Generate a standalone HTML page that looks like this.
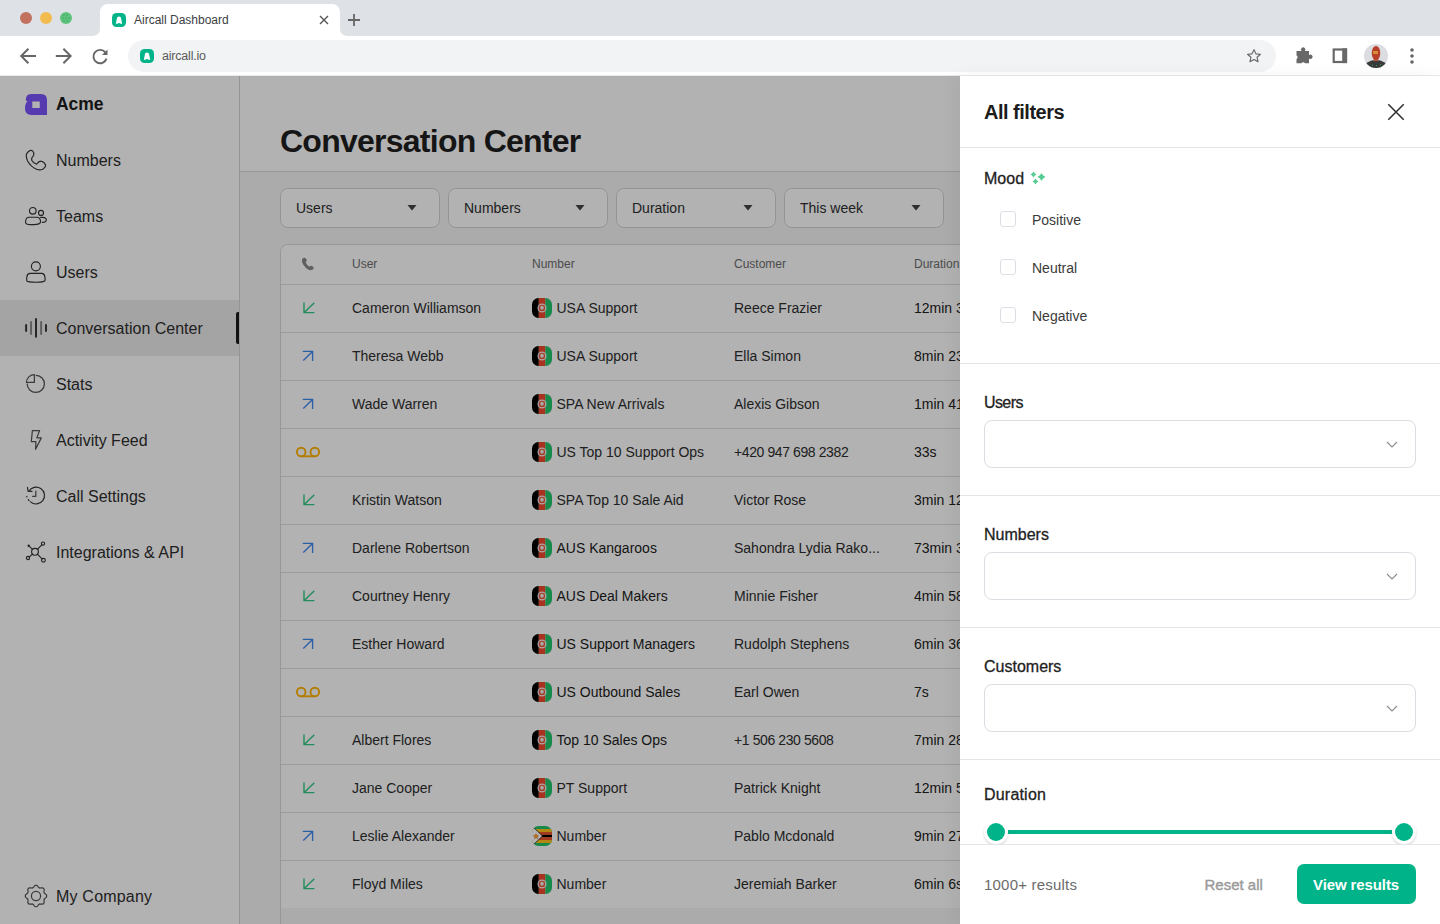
<!DOCTYPE html>
<html><head><meta charset="utf-8"><title>Aircall Dashboard</title>
<style>
*{box-sizing:border-box;margin:0;padding:0}
html,body{width:1440px;height:924px;overflow:hidden;background:#fff;font-family:"Liberation Sans", sans-serif;position:relative}
.abs{position:absolute}
svg{overflow:visible}
.t{position:absolute;white-space:nowrap}
</style></head><body>
<div class="abs" style="left:0;top:0;width:1440px;height:36px;background:#dee1e6"></div>
<div class="abs" style="left:20px;top:12px;width:12px;height:12px;border-radius:50%;background:#c1715d"></div>
<div class="abs" style="left:40px;top:12px;width:12px;height:12px;border-radius:50%;background:#f2bb4f"></div>
<div class="abs" style="left:60px;top:12px;width:12px;height:12px;border-radius:50%;background:#5cc47c"></div>
<svg class="abs" style="left:60px;top:12px" width="12" height="12"><g fill="#2e7d4a" opacity=".55"><circle cx="4" cy="3" r=".7"/><circle cx="7" cy="3" r=".7"/><circle cx="3" cy="6" r=".7"/><circle cx="6" cy="6" r=".7"/><circle cx="9" cy="6" r=".7"/><circle cx="4" cy="9" r=".7"/><circle cx="7" cy="9" r=".7"/></g></svg>
<div class="abs" style="left:100px;top:4px;width:240px;height:32px;background:#fff;border-radius:8px 8px 0 0"></div>
<svg class="abs" style="left:92px;top:28px" width="8" height="8"><path d="M0 8 Q8 8 8 0 L8 8 Z" fill="#fff"/></svg>
<svg class="abs" style="left:340px;top:28px" width="8" height="8"><path d="M8 8 Q0 8 0 0 L0 8 Z" fill="#fff"/></svg>
<svg class="abs" style="left:112px;top:13px" width="14" height="14" viewBox="0 0 14 14"><rect width="14" height="14" rx="4.6" fill="#00b388"/><path d="M3.8 10.8 L5.1 4.4 Q7 2.4 8.9 4.4 L10.2 10.8 L8.6 10.8 Q7 9.2 5.4 10.8 Z" fill="#fff"/></svg>
<div class="t" style="left:134px;top:14.14px;font-size:12px;line-height:12px;color:#3c4043;font-weight:normal;letter-spacing:0px;">Aircall Dashboard</div>
<svg class="abs" style="left:319px;top:15px" width="10" height="10"><path d="M1 1 L9 9 M9 1 L1 9" stroke="#555" stroke-width="1.4"/></svg>
<svg class="abs" style="left:347px;top:13px" width="14" height="14"><path d="M7 1 V13 M1 7 H13" stroke="#666" stroke-width="1.8"/></svg>
<div class="abs" style="left:0;top:36px;width:1440px;height:40px;background:#fff"></div>
<div class="abs" style="left:0;top:75px;width:1440px;height:1px;background:#e8eaed"></div>
<svg class="abs" style="left:18px;top:46px" width="20" height="20" viewBox="0 0 20 20"><path d="M18 10 H3.2 M10.4 2.8 L3.2 10 L10.4 17.2" fill="none" stroke="#666" stroke-width="2"/></svg>
<svg class="abs" style="left:54px;top:46px" width="20" height="20" viewBox="0 0 20 20"><path d="M1.8 10 H16.6 M9.4 2.8 L16.6 10 L9.4 17.2" fill="none" stroke="#666" stroke-width="2"/></svg>
<svg class="abs" style="left:90px;top:46px" width="20" height="20" viewBox="0 0 20 20"><path d="M15.4 6.4 A6.7 6.7 0 1 0 16.5 12.6" fill="none" stroke="#666" stroke-width="1.9"/><path d="M17.5 3.6 V9.1 H12 Z" fill="#666"/></svg>
<div class="abs" style="left:128px;top:40px;width:1148px;height:32px;background:#f1f3f4;border-radius:16px"></div>
<svg class="abs" style="left:140px;top:49px" width="14" height="14" viewBox="0 0 14 14"><rect width="14" height="14" rx="4.6" fill="#00b388"/><path d="M3.8 10.8 L5.1 4.4 Q7 2.4 8.9 4.4 L10.2 10.8 L8.6 10.8 Q7 9.2 5.4 10.8 Z" fill="#fff"/></svg>
<div class="t" style="left:162px;top:49.72px;font-size:12.5px;line-height:12.5px;color:#5a5a5a;font-weight:normal;letter-spacing:-0.2px;">aircall.io</div>
<svg class="abs" style="left:1245px;top:47px" width="18" height="18" viewBox="0 0 24 24"><path d="M12 3.5 L14.6 9.1 L20.6 9.7 L16.1 13.7 L17.4 19.7 L12 16.6 L6.6 19.7 L7.9 13.7 L3.4 9.7 L9.4 9.1 Z" fill="none" stroke="#666" stroke-width="1.5" stroke-linejoin="round"/></svg>
<svg class="abs" style="left:1295px;top:46px" width="18" height="18" viewBox="0 0 18 18"><path d="M1.5 5 H6.5 A2.2 2.2 0 1 1 9.9 5 H14 V9 A2.2 2.2 0 1 1 14 12.4 V17.3 H10 A2 2 0 0 0 6.4 17.3 H1.5 V13 A2 2 0 0 0 1.5 9.4 Z" fill="#686868"/></svg>
<svg class="abs" style="left:1331px;top:47px" width="18" height="18" viewBox="0 0 18 18"><rect x="2.7" y="2.5" width="12.3" height="12.5" fill="none" stroke="#686868" stroke-width="2.2"/><rect x="11.2" y="1.4" width="4.9" height="14.7" fill="#686868"/></svg>
<svg class="abs" style="left:1364px;top:44px" width="24" height="24" viewBox="0 0 24 24"><defs><clipPath id="av"><circle cx="12" cy="12" r="12"/></clipPath></defs><g clip-path="url(#av)"><rect width="24" height="24" fill="#dcdde0"/><ellipse cx="12" cy="24" rx="11.5" ry="8" fill="#3a3a3a"/><rect x="9.5" y="13" width="5" height="4" fill="#b0603a"/><ellipse cx="12" cy="9" rx="4.3" ry="7" fill="#b8402a"/><path d="M9 7 H14 V10 H9 Z" fill="#e0a838" opacity=".75"/><circle cx="8.5" cy="21" r=".6" fill="#2fbf5f"/><circle cx="12.5" cy="21.5" r=".6" fill="#2fbf5f"/><circle cx="16.5" cy="20.5" r=".6" fill="#2fbf5f"/></g></svg>
<svg class="abs" style="left:1408px;top:47px" width="8" height="18"><circle cx="4" cy="3" r="1.8" fill="#666"/><circle cx="4" cy="9" r="1.8" fill="#666"/><circle cx="4" cy="15" r="1.8" fill="#666"/></svg>
<div class="abs" style="left:0;top:76px;width:1440px;height:848px;background:#f5f5f5"></div>
<div class="abs" style="left:0;top:76px;width:239px;height:848px;background:#fff"></div>
<div class="abs" style="left:239px;top:76px;width:1px;height:848px;background:#d6d6d6"></div>
<div class="abs" style="left:0;top:300px;width:239px;height:56px;background:#ebebeb"></div>
<div class="abs" style="left:235.5px;top:312px;width:3.5px;height:32px;background:#1a1a1a;border-radius:2px 0 0 2px"></div>
<svg class="abs" style="left:25px;top:94px" width="22" height="21" viewBox="0 0 22 21"><path d="M6 0 H16 Q22 0 22 6 V21 H6.5 Q0 21 0 14.5 Q0 9 2.5 7.2 Q0.8 6.8 0.8 6 Q0.8 0 6 0 Z M7.3 7.4 V14 H14.75 V7.4 Z" fill="#7b54fb" fill-rule="evenodd"/></svg>
<div class="t" style="left:56px;top:95.94px;font-size:17.5px;line-height:17.5px;color:#1c1c1c;font-weight:bold;letter-spacing:-0.1px;">Acme</div>
<svg class="abs" style="left:25px;top:150px" width="22" height="22" viewBox="0 0 22 22"><path d="M5.7 0.4 Q3.2 0.9 1.7 3.6 Q0.5 6.4 2.6 11 Q5.8 16.8 11.6 19.3 Q15.2 20.6 18.2 18.9 Q21 17 20.6 15 Q19.6 12 16.2 11.2 Q13.6 11.1 11.6 14.2 Q8.4 13.4 6.7 10.2 Q6.2 7.8 8.6 5.4 Q9.4 2.6 7.6 0.9 Q6.8 0.3 5.7 0.4 Z" fill="none" stroke="#333" stroke-width="1.15" stroke-linecap="round" stroke-linejoin="round"/></svg>
<div class="t" style="left:56px;top:153.46px;font-size:16px;line-height:16px;color:#2e2e2e;font-weight:normal;letter-spacing:0px;">Numbers</div>
<svg class="abs" style="left:25px;top:206px" width="22" height="22" viewBox="0 0 22 22"><circle cx="7.8" cy="4.8" r="3.3" fill="none" stroke="#333" stroke-width="1.15" stroke-linecap="round" stroke-linejoin="round"/><circle cx="16" cy="6.9" r="2.5" fill="none" stroke="#333" stroke-width="1.15" stroke-linecap="round" stroke-linejoin="round"/><path d="M4 11.2 H11.8 Q15.3 11.2 15.6 15.6 Q15.7 18.6 8.6 18.6 H5.6 Q0.3 18.6 0.5 15.8 Q0.9 11.2 4 11.2 Z" fill="none" stroke="#333" stroke-width="1.15" stroke-linecap="round" stroke-linejoin="round"/><path d="M15.6 11.4 H17.6 Q21.4 11.6 21.3 14.2 Q21.1 16.2 17.4 16.4" fill="none" stroke="#333" stroke-width="1.15" stroke-linecap="round" stroke-linejoin="round"/></svg>
<div class="t" style="left:56px;top:209.46px;font-size:16px;line-height:16px;color:#2e2e2e;font-weight:normal;letter-spacing:0px;">Teams</div>
<svg class="abs" style="left:25px;top:262px" width="22" height="22" viewBox="0 0 22 22"><circle cx="10.9" cy="4.3" r="4.5" fill="none" stroke="#333" stroke-width="1.15" stroke-linecap="round" stroke-linejoin="round"/><path d="M5 11.4 H16.8 Q19.4 11.4 19.8 14.6 Q20.4 17.4 20 18.6 Q19 20.2 11 20.2 Q2.8 20.2 1.8 18.8 Q1.4 17.6 1.9 14.6 Q2.4 11.4 5 11.4 Z" fill="none" stroke="#333" stroke-width="1.15" stroke-linecap="round" stroke-linejoin="round"/></svg>
<div class="t" style="left:56px;top:265.46px;font-size:16px;line-height:16px;color:#2e2e2e;font-weight:normal;letter-spacing:0px;">Users</div>
<svg class="abs" style="left:25px;top:318px" width="22" height="22" viewBox="0 0 22 22"><rect x="0.1" y="6" width="2" height="7.9" rx="1" fill="#383838"/><rect x="5.05" y="3" width="2" height="13.9" rx="1" fill="#8a8a8a"/><rect x="10" y="0.1" width="2" height="19.7" rx="1" fill="#383838"/><rect x="15.1" y="3" width="2" height="13.9" rx="1" fill="#8a8a8a"/><rect x="20" y="6" width="2" height="7.9" rx="1" fill="#383838"/></svg>
<div class="t" style="left:56px;top:321.46px;font-size:16px;line-height:16px;color:#2e2e2e;font-weight:normal;letter-spacing:0px;">Conversation Center</div>
<svg class="abs" style="left:25px;top:374px" width="22" height="22" viewBox="0 0 22 22"><path d="M11.2 1.3 A8.6 8.6 0 1 1 2.2 10" fill="none" stroke="#555" stroke-width="1.25" stroke-linecap="round" stroke-linejoin="round"/><path d="M9.4 0.6 V8.3 H1.4 A8 8 0 0 1 9.4 0.6 Z" fill="none" stroke="#555" stroke-width="1.25" stroke-linecap="round" stroke-linejoin="round"/></svg>
<div class="t" style="left:56px;top:377.46px;font-size:16px;line-height:16px;color:#2e2e2e;font-weight:normal;letter-spacing:0px;">Stats</div>
<svg class="abs" style="left:25px;top:430px" width="22" height="22" viewBox="0 0 22 22"><path d="M7.4 0.5 H14.6 L11.8 7.9 H16.3 L10.6 19.3 L10.9 11.5 H6.3 Z" fill="none" stroke="#555" stroke-width="1.25" stroke-linecap="round" stroke-linejoin="round"/></svg>
<div class="t" style="left:56px;top:433.46px;font-size:16px;line-height:16px;color:#2e2e2e;font-weight:normal;letter-spacing:0px;">Activity Feed</div>
<svg class="abs" style="left:25px;top:486px" width="22" height="22" viewBox="0 0 22 22"><path d="M3.83 5.35 A8.4 8.4 0 1 1 5.6 15.9" fill="none" stroke="#333" stroke-width="1.15" stroke-linecap="round" stroke-linejoin="round"/><path d="M3.3 13.6 L4.1 14.8" fill="none" stroke="#333" stroke-width="1.15" stroke-linecap="round" stroke-linejoin="round"/><path d="M1.8 10.4 L1.8 10.9" fill="none" stroke="#333" stroke-width="1.15" stroke-linecap="round" stroke-linejoin="round" stroke-width="1.5"/><path d="M2.5 1.3 L3.1 5.3 L7 5.4" fill="none" stroke="#333" stroke-width="1.15" stroke-linecap="round" stroke-linejoin="round"/><path d="M10.8 5.2 V10.3 H7.6" fill="none" stroke="#555" stroke-width="1.25" stroke-linecap="round" stroke-linejoin="round" stroke-width="1.5"/></svg>
<div class="t" style="left:56px;top:489.46px;font-size:16px;line-height:16px;color:#2e2e2e;font-weight:normal;letter-spacing:0px;">Call Settings</div>
<svg class="abs" style="left:25px;top:542px" width="22" height="22" viewBox="0 0 22 22"><circle cx="10" cy="9.8" r="3.4" fill="none" stroke="#333" stroke-width="1.15" stroke-linecap="round" stroke-linejoin="round"/><circle cx="3.7" cy="3.7" r="1.2" fill="#333"/><circle cx="18" cy="1.6" r="1.6" fill="none" stroke="#333" stroke-width="1.15" stroke-linecap="round" stroke-linejoin="round"/><circle cx="3" cy="16" r="1.6" fill="none" stroke="#333" stroke-width="1.15" stroke-linecap="round" stroke-linejoin="round"/><circle cx="18.4" cy="18.2" r="1.9" fill="none" stroke="#333" stroke-width="1.15" stroke-linecap="round" stroke-linejoin="round"/><path d="M4.4 4.4 L7.6 7.4 M16.8 2.8 L12.4 7.4 M4.1 14.9 L7.6 12.2 M17 16.8 L12.4 12.2" fill="none" stroke="#333" stroke-width="1.15" stroke-linecap="round" stroke-linejoin="round"/></svg>
<div class="t" style="left:56px;top:545.46px;font-size:16px;line-height:16px;color:#2e2e2e;font-weight:normal;letter-spacing:0px;">Integrations &amp; API</div>
<svg class="abs" style="left:25px;top:885px" width="22" height="22" viewBox="0 0 22 22"><path d="M11.00 0.25 L11.69 0.41 L12.34 0.84 L12.90 1.44 L13.39 2.07 L13.86 2.59 L14.35 2.92 L14.93 3.03 L15.62 2.99 L16.42 2.89 L17.24 2.87 L18.00 3.02 L18.60 3.40 L18.98 4.00 L19.13 4.76 L19.11 5.58 L19.01 6.37 L18.97 7.07 L19.08 7.65 L19.41 8.14 L19.93 8.61 L20.56 9.10 L21.16 9.66 L21.59 10.31 L21.75 11.00 L21.59 11.69 L21.16 12.34 L20.56 12.90 L19.93 13.39 L19.41 13.86 L19.08 14.35 L18.97 14.93 L19.01 15.62 L19.11 16.42 L19.13 17.24 L18.98 18.00 L18.60 18.60 L18.00 18.98 L17.24 19.13 L16.42 19.11 L15.62 19.01 L14.93 18.97 L14.35 19.08 L13.86 19.41 L13.39 19.93 L12.90 20.56 L12.34 21.16 L11.69 21.59 L11.00 21.75 L10.31 21.59 L9.66 21.16 L9.10 20.56 L8.61 19.93 L8.14 19.41 L7.65 19.08 L7.07 18.97 L6.38 19.01 L5.58 19.11 L4.76 19.13 L4.00 18.98 L3.40 18.60 L3.02 18.00 L2.87 17.24 L2.89 16.42 L2.99 15.63 L3.03 14.93 L2.92 14.35 L2.59 13.86 L2.07 13.39 L1.44 12.90 L0.84 12.34 L0.41 11.69 L0.25 11.00 L0.41 10.31 L0.84 9.66 L1.44 9.10 L2.07 8.61 L2.59 8.14 L2.92 7.65 L3.03 7.07 L2.99 6.37 L2.89 5.58 L2.87 4.76 L3.02 4.00 L3.40 3.40 L4.00 3.02 L4.76 2.87 L5.58 2.89 L6.37 2.99 L7.07 3.03 L7.65 2.92 L8.14 2.59 L8.61 2.07 L9.10 1.44 L9.66 0.84 L10.31 0.41 Z" fill="none" stroke="#555" stroke-width="1.25" stroke-linecap="round" stroke-linejoin="round" stroke-width="1.2"/><circle cx="11" cy="11" r="4.6" fill="none" stroke="#555" stroke-width="1.25" stroke-linecap="round" stroke-linejoin="round" stroke-width="1.2"/></svg>
<div class="t" style="left:56px;top:889.46px;font-size:16px;line-height:16px;color:#2e2e2e;font-weight:normal;letter-spacing:0.2px;">My Company</div>
<div class="abs" style="left:240px;top:76px;width:1200px;height:95px;background:#fff"></div>
<div class="abs" style="left:240px;top:171px;width:1200px;height:1px;background:#d9d9d9"></div>
<div class="t" style="left:280px;top:124.61px;font-size:32px;line-height:32px;color:#1f1f1f;font-weight:bold;letter-spacing:-0.75px;">Conversation Center</div>
<div class="abs" style="left:280px;top:188px;width:160px;height:40px;background:#fff;border:1px solid #d5d5d5;border-radius:8px"></div>
<div class="t" style="left:296px;top:200.90px;font-size:14px;line-height:14px;color:#2e2e2e;font-weight:normal;letter-spacing:0px;">Users</div>
<svg class="abs" style="left:407px;top:205px" width="10" height="6"><path d="M0.5 0 H9.5 L5 5.5 Z" fill="#444"/></svg>
<div class="abs" style="left:448px;top:188px;width:160px;height:40px;background:#fff;border:1px solid #d5d5d5;border-radius:8px"></div>
<div class="t" style="left:464px;top:200.90px;font-size:14px;line-height:14px;color:#2e2e2e;font-weight:normal;letter-spacing:0px;">Numbers</div>
<svg class="abs" style="left:575px;top:205px" width="10" height="6"><path d="M0.5 0 H9.5 L5 5.5 Z" fill="#444"/></svg>
<div class="abs" style="left:616px;top:188px;width:160px;height:40px;background:#fff;border:1px solid #d5d5d5;border-radius:8px"></div>
<div class="t" style="left:632px;top:200.90px;font-size:14px;line-height:14px;color:#2e2e2e;font-weight:normal;letter-spacing:0px;">Duration</div>
<svg class="abs" style="left:743px;top:205px" width="10" height="6"><path d="M0.5 0 H9.5 L5 5.5 Z" fill="#444"/></svg>
<div class="abs" style="left:784px;top:188px;width:160px;height:40px;background:#fff;border:1px solid #d5d5d5;border-radius:8px"></div>
<div class="t" style="left:800px;top:200.90px;font-size:14px;line-height:14px;color:#2e2e2e;font-weight:normal;letter-spacing:0px;">This week</div>
<svg class="abs" style="left:911px;top:205px" width="10" height="6"><path d="M0.5 0 H9.5 L5 5.5 Z" fill="#444"/></svg>
<div class="abs" style="left:280px;top:244px;width:700px;height:700px;background:#f5f5f5;border:1px solid #d9d9d9;border-radius:8px 0 0 0"></div>
<div class="abs" style="left:281px;top:245px;width:700px;height:663px;background:#fff;border-radius:7px 0 0 0"></div>
<svg class="abs" style="left:301px;top:257px" width="14" height="14" viewBox="0 0 14 14"><path d="M3.2 0.8 Q1.6 0.8 1 2.4 Q0.5 4.6 2.2 7.6 Q4.6 11.6 8 13 Q10 13.6 11.6 12.6 Q13.2 11.6 12.6 10.4 Q11.8 9.2 10.2 8.8 Q9 8.8 8.5 9.8 Q6.4 8.8 5 6 Q4.5 5 5.2 4.4 Q6 3.8 5.7 2.6 Q5 0.8 3.2 0.8 Z" fill="#8a8a8a"/></svg>
<div class="t" style="left:352px;top:257.74px;font-size:12px;line-height:12px;color:#6e6e6e;font-weight:normal;letter-spacing:0px;">User</div>
<div class="t" style="left:532px;top:257.74px;font-size:12px;line-height:12px;color:#6e6e6e;font-weight:normal;letter-spacing:0px;">Number</div>
<div class="t" style="left:734px;top:257.74px;font-size:12px;line-height:12px;color:#6e6e6e;font-weight:normal;letter-spacing:0px;">Customer</div>
<div class="t" style="left:914px;top:257.74px;font-size:12px;line-height:12px;color:#6e6e6e;font-weight:normal;letter-spacing:0px;">Duration</div>
<div class="abs" style="left:281px;top:284px;width:700px;height:1px;background:#dedede"></div>
<svg class="abs" style="left:301.5px;top:301px" width="14" height="14" viewBox="0 0 14 14"><path d="M12.3 1.7 L2.3 11.5 M2 1.4 V11.6 H12.4" fill="none" stroke="#32c882" stroke-width="1.4"/></svg>
<div class="t" style="left:352px;top:300.95px;font-size:14px;line-height:14px;color:#2e2e2e;font-weight:normal;letter-spacing:0px;">Cameron Williamson</div>
<svg class="abs" style="left:532px;top:298px" width="20" height="20" viewBox="0 0 20 20"><defs><clipPath id="fc0"><rect width="20" height="20" rx="6.5"/></clipPath></defs><g clip-path="url(#fc0)"><rect width="6.8" height="20" fill="#000"/><rect x="6.8" width="6.6" height="20" fill="#ee4a2c"/><rect x="13.4" width="6.6" height="20" fill="#22c46a"/><circle cx="10" cy="10" r="3.9" fill="none" stroke="#fff" stroke-width="1.3" opacity=".9"/><circle cx="10" cy="10" r="2.6" fill="none" stroke="#e86a4a" stroke-width="0.8"/><ellipse cx="10" cy="9.8" rx="1.8" ry="2" fill="#f2f2f2"/></g></svg>
<div class="t" style="left:556.5px;top:300.95px;font-size:14px;line-height:14px;color:#2e2e2e;font-weight:normal;letter-spacing:0px;">USA Support</div>
<div class="t" style="left:734px;top:300.95px;font-size:14px;line-height:14px;color:#2e2e2e;font-weight:normal;letter-spacing:0px;">Reece Frazier</div>
<div class="t" style="left:914px;top:300.95px;font-size:14px;line-height:14px;color:#222;font-weight:normal;letter-spacing:0px;">12min 32s</div>
<div class="abs" style="left:281px;top:332px;width:700px;height:1px;background:#dedede"></div>
<svg class="abs" style="left:301px;top:349px" width="14" height="14" viewBox="0 0 14 14"><path d="M2.3 11.6 L11.5 2.5 M1.8 2.4 H11.6 V11.9" fill="none" stroke="#4088f0" stroke-width="1.35"/></svg>
<div class="t" style="left:352px;top:348.95px;font-size:14px;line-height:14px;color:#2e2e2e;font-weight:normal;letter-spacing:0px;">Theresa Webb</div>
<svg class="abs" style="left:532px;top:346px" width="20" height="20" viewBox="0 0 20 20"><defs><clipPath id="fc1"><rect width="20" height="20" rx="6.5"/></clipPath></defs><g clip-path="url(#fc1)"><rect width="6.8" height="20" fill="#000"/><rect x="6.8" width="6.6" height="20" fill="#ee4a2c"/><rect x="13.4" width="6.6" height="20" fill="#22c46a"/><circle cx="10" cy="10" r="3.9" fill="none" stroke="#fff" stroke-width="1.3" opacity=".9"/><circle cx="10" cy="10" r="2.6" fill="none" stroke="#e86a4a" stroke-width="0.8"/><ellipse cx="10" cy="9.8" rx="1.8" ry="2" fill="#f2f2f2"/></g></svg>
<div class="t" style="left:556.5px;top:348.95px;font-size:14px;line-height:14px;color:#2e2e2e;font-weight:normal;letter-spacing:0px;">USA Support</div>
<div class="t" style="left:734px;top:348.95px;font-size:14px;line-height:14px;color:#2e2e2e;font-weight:normal;letter-spacing:0px;">Ella Simon</div>
<div class="t" style="left:914px;top:348.95px;font-size:14px;line-height:14px;color:#222;font-weight:normal;letter-spacing:0px;">8min 23s</div>
<div class="abs" style="left:281px;top:380px;width:700px;height:1px;background:#dedede"></div>
<svg class="abs" style="left:301px;top:397px" width="14" height="14" viewBox="0 0 14 14"><path d="M2.3 11.6 L11.5 2.5 M1.8 2.4 H11.6 V11.9" fill="none" stroke="#4088f0" stroke-width="1.35"/></svg>
<div class="t" style="left:352px;top:396.95px;font-size:14px;line-height:14px;color:#2e2e2e;font-weight:normal;letter-spacing:0px;">Wade Warren</div>
<svg class="abs" style="left:532px;top:394px" width="20" height="20" viewBox="0 0 20 20"><defs><clipPath id="fc2"><rect width="20" height="20" rx="6.5"/></clipPath></defs><g clip-path="url(#fc2)"><rect width="6.8" height="20" fill="#000"/><rect x="6.8" width="6.6" height="20" fill="#ee4a2c"/><rect x="13.4" width="6.6" height="20" fill="#22c46a"/><circle cx="10" cy="10" r="3.9" fill="none" stroke="#fff" stroke-width="1.3" opacity=".9"/><circle cx="10" cy="10" r="2.6" fill="none" stroke="#e86a4a" stroke-width="0.8"/><ellipse cx="10" cy="9.8" rx="1.8" ry="2" fill="#f2f2f2"/></g></svg>
<div class="t" style="left:556.5px;top:396.95px;font-size:14px;line-height:14px;color:#2e2e2e;font-weight:normal;letter-spacing:0px;">SPA New Arrivals</div>
<div class="t" style="left:734px;top:396.95px;font-size:14px;line-height:14px;color:#2e2e2e;font-weight:normal;letter-spacing:0px;">Alexis Gibson</div>
<div class="t" style="left:914px;top:396.95px;font-size:14px;line-height:14px;color:#222;font-weight:normal;letter-spacing:0px;">1min 41s</div>
<div class="abs" style="left:281px;top:428px;width:700px;height:1px;background:#dedede"></div>
<svg class="abs" style="left:295px;top:445px" width="26" height="14" viewBox="0 0 26 14"><circle cx="6.2" cy="7" r="4.3" fill="none" stroke="#ffb300" stroke-width="1.9"/><circle cx="19.8" cy="7" r="4.3" fill="none" stroke="#ffb300" stroke-width="1.9"/><path d="M6.2 11.3 H19.8" stroke="#ffb300" stroke-width="1.9"/></svg>
<svg class="abs" style="left:532px;top:442px" width="20" height="20" viewBox="0 0 20 20"><defs><clipPath id="fc3"><rect width="20" height="20" rx="6.5"/></clipPath></defs><g clip-path="url(#fc3)"><rect width="6.8" height="20" fill="#000"/><rect x="6.8" width="6.6" height="20" fill="#ee4a2c"/><rect x="13.4" width="6.6" height="20" fill="#22c46a"/><circle cx="10" cy="10" r="3.9" fill="none" stroke="#fff" stroke-width="1.3" opacity=".9"/><circle cx="10" cy="10" r="2.6" fill="none" stroke="#e86a4a" stroke-width="0.8"/><ellipse cx="10" cy="9.8" rx="1.8" ry="2" fill="#f2f2f2"/></g></svg>
<div class="t" style="left:556.5px;top:444.95px;font-size:14px;line-height:14px;color:#2e2e2e;font-weight:normal;letter-spacing:0px;">US Top 10 Support Ops</div>
<div class="t" style="left:734px;top:444.95px;font-size:14px;line-height:14px;color:#2e2e2e;font-weight:normal;letter-spacing:-0.4px;">+420 947 698 2382</div>
<div class="t" style="left:914px;top:444.95px;font-size:14px;line-height:14px;color:#222;font-weight:normal;letter-spacing:0px;">33s</div>
<div class="abs" style="left:281px;top:476px;width:700px;height:1px;background:#dedede"></div>
<svg class="abs" style="left:301.5px;top:493px" width="14" height="14" viewBox="0 0 14 14"><path d="M12.3 1.7 L2.3 11.5 M2 1.4 V11.6 H12.4" fill="none" stroke="#32c882" stroke-width="1.4"/></svg>
<div class="t" style="left:352px;top:492.95px;font-size:14px;line-height:14px;color:#2e2e2e;font-weight:normal;letter-spacing:0px;">Kristin Watson</div>
<svg class="abs" style="left:532px;top:490px" width="20" height="20" viewBox="0 0 20 20"><defs><clipPath id="fc4"><rect width="20" height="20" rx="6.5"/></clipPath></defs><g clip-path="url(#fc4)"><rect width="6.8" height="20" fill="#000"/><rect x="6.8" width="6.6" height="20" fill="#ee4a2c"/><rect x="13.4" width="6.6" height="20" fill="#22c46a"/><circle cx="10" cy="10" r="3.9" fill="none" stroke="#fff" stroke-width="1.3" opacity=".9"/><circle cx="10" cy="10" r="2.6" fill="none" stroke="#e86a4a" stroke-width="0.8"/><ellipse cx="10" cy="9.8" rx="1.8" ry="2" fill="#f2f2f2"/></g></svg>
<div class="t" style="left:556.5px;top:492.95px;font-size:14px;line-height:14px;color:#2e2e2e;font-weight:normal;letter-spacing:0px;">SPA Top 10 Sale Aid</div>
<div class="t" style="left:734px;top:492.95px;font-size:14px;line-height:14px;color:#2e2e2e;font-weight:normal;letter-spacing:0px;">Victor Rose</div>
<div class="t" style="left:914px;top:492.95px;font-size:14px;line-height:14px;color:#222;font-weight:normal;letter-spacing:0px;">3min 12s</div>
<div class="abs" style="left:281px;top:524px;width:700px;height:1px;background:#dedede"></div>
<svg class="abs" style="left:301px;top:541px" width="14" height="14" viewBox="0 0 14 14"><path d="M2.3 11.6 L11.5 2.5 M1.8 2.4 H11.6 V11.9" fill="none" stroke="#4088f0" stroke-width="1.35"/></svg>
<div class="t" style="left:352px;top:540.95px;font-size:14px;line-height:14px;color:#2e2e2e;font-weight:normal;letter-spacing:0px;">Darlene Robertson</div>
<svg class="abs" style="left:532px;top:538px" width="20" height="20" viewBox="0 0 20 20"><defs><clipPath id="fc5"><rect width="20" height="20" rx="6.5"/></clipPath></defs><g clip-path="url(#fc5)"><rect width="6.8" height="20" fill="#000"/><rect x="6.8" width="6.6" height="20" fill="#ee4a2c"/><rect x="13.4" width="6.6" height="20" fill="#22c46a"/><circle cx="10" cy="10" r="3.9" fill="none" stroke="#fff" stroke-width="1.3" opacity=".9"/><circle cx="10" cy="10" r="2.6" fill="none" stroke="#e86a4a" stroke-width="0.8"/><ellipse cx="10" cy="9.8" rx="1.8" ry="2" fill="#f2f2f2"/></g></svg>
<div class="t" style="left:556.5px;top:540.95px;font-size:14px;line-height:14px;color:#1c1c1c;font-weight:normal;letter-spacing:0px;">AUS Kangaroos</div>
<div class="t" style="left:734px;top:540.95px;font-size:14px;line-height:14px;color:#2e2e2e;font-weight:normal;letter-spacing:0px;">Sahondra Lydia Rako...</div>
<div class="t" style="left:914px;top:540.95px;font-size:14px;line-height:14px;color:#222;font-weight:normal;letter-spacing:0px;">73min 31s</div>
<div class="abs" style="left:281px;top:572px;width:700px;height:1px;background:#dedede"></div>
<svg class="abs" style="left:301.5px;top:589px" width="14" height="14" viewBox="0 0 14 14"><path d="M12.3 1.7 L2.3 11.5 M2 1.4 V11.6 H12.4" fill="none" stroke="#32c882" stroke-width="1.4"/></svg>
<div class="t" style="left:352px;top:588.95px;font-size:14px;line-height:14px;color:#2e2e2e;font-weight:normal;letter-spacing:0px;">Courtney Henry</div>
<svg class="abs" style="left:532px;top:586px" width="20" height="20" viewBox="0 0 20 20"><defs><clipPath id="fc6"><rect width="20" height="20" rx="6.5"/></clipPath></defs><g clip-path="url(#fc6)"><rect width="6.8" height="20" fill="#000"/><rect x="6.8" width="6.6" height="20" fill="#ee4a2c"/><rect x="13.4" width="6.6" height="20" fill="#22c46a"/><circle cx="10" cy="10" r="3.9" fill="none" stroke="#fff" stroke-width="1.3" opacity=".9"/><circle cx="10" cy="10" r="2.6" fill="none" stroke="#e86a4a" stroke-width="0.8"/><ellipse cx="10" cy="9.8" rx="1.8" ry="2" fill="#f2f2f2"/></g></svg>
<div class="t" style="left:556.5px;top:588.95px;font-size:14px;line-height:14px;color:#1c1c1c;font-weight:normal;letter-spacing:0px;">AUS Deal Makers</div>
<div class="t" style="left:734px;top:588.95px;font-size:14px;line-height:14px;color:#2e2e2e;font-weight:normal;letter-spacing:0px;">Minnie Fisher</div>
<div class="t" style="left:914px;top:588.95px;font-size:14px;line-height:14px;color:#222;font-weight:normal;letter-spacing:0px;">4min 58s</div>
<div class="abs" style="left:281px;top:620px;width:700px;height:1px;background:#dedede"></div>
<svg class="abs" style="left:301px;top:637px" width="14" height="14" viewBox="0 0 14 14"><path d="M2.3 11.6 L11.5 2.5 M1.8 2.4 H11.6 V11.9" fill="none" stroke="#4088f0" stroke-width="1.35"/></svg>
<div class="t" style="left:352px;top:636.95px;font-size:14px;line-height:14px;color:#2e2e2e;font-weight:normal;letter-spacing:0px;">Esther Howard</div>
<svg class="abs" style="left:532px;top:634px" width="20" height="20" viewBox="0 0 20 20"><defs><clipPath id="fc7"><rect width="20" height="20" rx="6.5"/></clipPath></defs><g clip-path="url(#fc7)"><rect width="6.8" height="20" fill="#000"/><rect x="6.8" width="6.6" height="20" fill="#ee4a2c"/><rect x="13.4" width="6.6" height="20" fill="#22c46a"/><circle cx="10" cy="10" r="3.9" fill="none" stroke="#fff" stroke-width="1.3" opacity=".9"/><circle cx="10" cy="10" r="2.6" fill="none" stroke="#e86a4a" stroke-width="0.8"/><ellipse cx="10" cy="9.8" rx="1.8" ry="2" fill="#f2f2f2"/></g></svg>
<div class="t" style="left:556.5px;top:636.95px;font-size:14px;line-height:14px;color:#1c1c1c;font-weight:normal;letter-spacing:0px;">US Support Managers</div>
<div class="t" style="left:734px;top:636.95px;font-size:14px;line-height:14px;color:#2e2e2e;font-weight:normal;letter-spacing:0px;">Rudolph Stephens</div>
<div class="t" style="left:914px;top:636.95px;font-size:14px;line-height:14px;color:#222;font-weight:normal;letter-spacing:0px;">6min 36s</div>
<div class="abs" style="left:281px;top:668px;width:700px;height:1px;background:#dedede"></div>
<svg class="abs" style="left:295px;top:685px" width="26" height="14" viewBox="0 0 26 14"><circle cx="6.2" cy="7" r="4.3" fill="none" stroke="#ffb300" stroke-width="1.9"/><circle cx="19.8" cy="7" r="4.3" fill="none" stroke="#ffb300" stroke-width="1.9"/><path d="M6.2 11.3 H19.8" stroke="#ffb300" stroke-width="1.9"/></svg>
<svg class="abs" style="left:532px;top:682px" width="20" height="20" viewBox="0 0 20 20"><defs><clipPath id="fc8"><rect width="20" height="20" rx="6.5"/></clipPath></defs><g clip-path="url(#fc8)"><rect width="6.8" height="20" fill="#000"/><rect x="6.8" width="6.6" height="20" fill="#ee4a2c"/><rect x="13.4" width="6.6" height="20" fill="#22c46a"/><circle cx="10" cy="10" r="3.9" fill="none" stroke="#fff" stroke-width="1.3" opacity=".9"/><circle cx="10" cy="10" r="2.6" fill="none" stroke="#e86a4a" stroke-width="0.8"/><ellipse cx="10" cy="9.8" rx="1.8" ry="2" fill="#f2f2f2"/></g></svg>
<div class="t" style="left:556.5px;top:684.95px;font-size:14px;line-height:14px;color:#1c1c1c;font-weight:normal;letter-spacing:0px;">US Outbound Sales</div>
<div class="t" style="left:734px;top:684.95px;font-size:14px;line-height:14px;color:#2e2e2e;font-weight:normal;letter-spacing:0px;">Earl Owen</div>
<div class="t" style="left:914px;top:684.95px;font-size:14px;line-height:14px;color:#222;font-weight:normal;letter-spacing:0px;">7s</div>
<div class="abs" style="left:281px;top:716px;width:700px;height:1px;background:#dedede"></div>
<svg class="abs" style="left:301.5px;top:733px" width="14" height="14" viewBox="0 0 14 14"><path d="M12.3 1.7 L2.3 11.5 M2 1.4 V11.6 H12.4" fill="none" stroke="#32c882" stroke-width="1.4"/></svg>
<div class="t" style="left:352px;top:732.95px;font-size:14px;line-height:14px;color:#2e2e2e;font-weight:normal;letter-spacing:0px;">Albert Flores</div>
<svg class="abs" style="left:532px;top:730px" width="20" height="20" viewBox="0 0 20 20"><defs><clipPath id="fc9"><rect width="20" height="20" rx="6.5"/></clipPath></defs><g clip-path="url(#fc9)"><rect width="6.8" height="20" fill="#000"/><rect x="6.8" width="6.6" height="20" fill="#ee4a2c"/><rect x="13.4" width="6.6" height="20" fill="#22c46a"/><circle cx="10" cy="10" r="3.9" fill="none" stroke="#fff" stroke-width="1.3" opacity=".9"/><circle cx="10" cy="10" r="2.6" fill="none" stroke="#e86a4a" stroke-width="0.8"/><ellipse cx="10" cy="9.8" rx="1.8" ry="2" fill="#f2f2f2"/></g></svg>
<div class="t" style="left:556.5px;top:732.95px;font-size:14px;line-height:14px;color:#1c1c1c;font-weight:normal;letter-spacing:0px;">Top 10 Sales Ops</div>
<div class="t" style="left:734px;top:732.95px;font-size:14px;line-height:14px;color:#2e2e2e;font-weight:normal;letter-spacing:-0.4px;">+1 506 230 5608</div>
<div class="t" style="left:914px;top:732.95px;font-size:14px;line-height:14px;color:#222;font-weight:normal;letter-spacing:0px;">7min 28s</div>
<div class="abs" style="left:281px;top:764px;width:700px;height:1px;background:#dedede"></div>
<svg class="abs" style="left:301.5px;top:781px" width="14" height="14" viewBox="0 0 14 14"><path d="M12.3 1.7 L2.3 11.5 M2 1.4 V11.6 H12.4" fill="none" stroke="#32c882" stroke-width="1.4"/></svg>
<div class="t" style="left:352px;top:780.95px;font-size:14px;line-height:14px;color:#2e2e2e;font-weight:normal;letter-spacing:0px;">Jane Cooper</div>
<svg class="abs" style="left:532px;top:778px" width="20" height="20" viewBox="0 0 20 20"><defs><clipPath id="fc10"><rect width="20" height="20" rx="6.5"/></clipPath></defs><g clip-path="url(#fc10)"><rect width="6.8" height="20" fill="#000"/><rect x="6.8" width="6.6" height="20" fill="#ee4a2c"/><rect x="13.4" width="6.6" height="20" fill="#22c46a"/><circle cx="10" cy="10" r="3.9" fill="none" stroke="#fff" stroke-width="1.3" opacity=".9"/><circle cx="10" cy="10" r="2.6" fill="none" stroke="#e86a4a" stroke-width="0.8"/><ellipse cx="10" cy="9.8" rx="1.8" ry="2" fill="#f2f2f2"/></g></svg>
<div class="t" style="left:556.5px;top:780.95px;font-size:14px;line-height:14px;color:#2e2e2e;font-weight:normal;letter-spacing:0px;">PT Support</div>
<div class="t" style="left:734px;top:780.95px;font-size:14px;line-height:14px;color:#2e2e2e;font-weight:normal;letter-spacing:0px;">Patrick Knight</div>
<div class="t" style="left:914px;top:780.95px;font-size:14px;line-height:14px;color:#222;font-weight:normal;letter-spacing:0px;">12min 54s</div>
<div class="abs" style="left:281px;top:812px;width:700px;height:1px;background:#dedede"></div>
<svg class="abs" style="left:301px;top:829px" width="14" height="14" viewBox="0 0 14 14"><path d="M2.3 11.6 L11.5 2.5 M1.8 2.4 H11.6 V11.9" fill="none" stroke="#4088f0" stroke-width="1.35"/></svg>
<div class="t" style="left:352px;top:828.95px;font-size:14px;line-height:14px;color:#2e2e2e;font-weight:normal;letter-spacing:0px;">Leslie Alexander</div>
<svg class="abs" style="left:532px;top:826px" width="20" height="20" viewBox="0 0 20 20"><defs><clipPath id="fc11"><rect width="20" height="20" rx="6.5"/></clipPath></defs><g clip-path="url(#fc11)"><rect width="20" height="20" fill="#22c46a"/><rect y="3" width="20" height="3" fill="#ffc21a"/><rect y="6" width="20" height="2.9" fill="#f0552e"/><rect y="8.9" width="20" height="2.2" fill="#000"/><rect y="11.1" width="20" height="2.9" fill="#f0552e"/><rect y="14" width="20" height="3" fill="#ffc21a"/><path d="M0 0 L10.5 10 L0 20 Z" fill="#fff"/><path d="M0 0 L10.5 10 L0 20" fill="none" stroke="#111" stroke-width="0.7"/><path d="M4 7.6 L4.8 9.5 L6.7 9.6 L5.2 10.8 L5.7 12.7 L4 11.6 L2.3 12.7 L2.8 10.8 L1.3 9.6 L3.2 9.5 Z" fill="#f5b000" stroke="#e84a2a" stroke-width=".4"/></g></svg>
<div class="t" style="left:556.5px;top:828.95px;font-size:14px;line-height:14px;color:#2e2e2e;font-weight:normal;letter-spacing:0px;">Number</div>
<div class="t" style="left:734px;top:828.95px;font-size:14px;line-height:14px;color:#2e2e2e;font-weight:normal;letter-spacing:0px;">Pablo Mcdonald</div>
<div class="t" style="left:914px;top:828.95px;font-size:14px;line-height:14px;color:#222;font-weight:normal;letter-spacing:0px;">9min 27s</div>
<div class="abs" style="left:281px;top:860px;width:700px;height:1px;background:#dedede"></div>
<svg class="abs" style="left:301.5px;top:877px" width="14" height="14" viewBox="0 0 14 14"><path d="M12.3 1.7 L2.3 11.5 M2 1.4 V11.6 H12.4" fill="none" stroke="#32c882" stroke-width="1.4"/></svg>
<div class="t" style="left:352px;top:876.95px;font-size:14px;line-height:14px;color:#2e2e2e;font-weight:normal;letter-spacing:0px;">Floyd Miles</div>
<svg class="abs" style="left:532px;top:874px" width="20" height="20" viewBox="0 0 20 20"><defs><clipPath id="fc12"><rect width="20" height="20" rx="6.5"/></clipPath></defs><g clip-path="url(#fc12)"><rect width="6.8" height="20" fill="#000"/><rect x="6.8" width="6.6" height="20" fill="#ee4a2c"/><rect x="13.4" width="6.6" height="20" fill="#22c46a"/><circle cx="10" cy="10" r="3.9" fill="none" stroke="#fff" stroke-width="1.3" opacity=".9"/><circle cx="10" cy="10" r="2.6" fill="none" stroke="#e86a4a" stroke-width="0.8"/><ellipse cx="10" cy="9.8" rx="1.8" ry="2" fill="#f2f2f2"/></g></svg>
<div class="t" style="left:556.5px;top:876.95px;font-size:14px;line-height:14px;color:#2e2e2e;font-weight:normal;letter-spacing:0px;">Number</div>
<div class="t" style="left:734px;top:876.95px;font-size:14px;line-height:14px;color:#2e2e2e;font-weight:normal;letter-spacing:0px;">Jeremiah Barker</div>
<div class="t" style="left:914px;top:876.95px;font-size:14px;line-height:14px;color:#222;font-weight:normal;letter-spacing:0px;">6min 6s</div>
<div class="abs" style="left:0;top:76px;width:960px;height:848px;background:rgba(0,0,0,.3)"></div>
<div class="abs" style="left:960px;top:76px;width:480px;height:848px;background:#fff;box-shadow:-5px 0 16px rgba(0,0,0,.05)"></div>
<div class="t" style="left:984px;top:101.82px;font-size:20px;line-height:20px;color:#1c1c1c;font-weight:bold;letter-spacing:-0.5px;">All filters</div>
<svg class="abs" style="left:1386px;top:102px" width="20" height="20"><path d="M2.3 2.3 L17.7 17.7 M17.7 2.3 L2.3 17.7" stroke="#333" stroke-width="1.6"/></svg>
<div class="abs" style="left:960px;top:147px;width:480px;height:1px;background:#e3e4e8"></div>
<div class="t" style="left:984px;top:171.46px;font-size:16px;line-height:16px;color:#222;font-weight:normal;letter-spacing:0px;-webkit-text-stroke:0.3px #222">Mood</div>
<svg class="abs" style="left:1030px;top:171px" width="16" height="14" viewBox="0 0 16 14"><path d="M3.5 0.5 Q4.34 2.66 6.5 3.5 Q4.34 4.34 3.5 6.5 Q2.66 4.34 0.5 3.5 Q2.66 2.66 3.5 0.5 Z M11.5 2.0 Q12.620000000000001 4.88 15.5 6.0 Q12.620000000000001 7.12 11.5 10.0 Q10.379999999999999 7.12 7.5 6.0 Q10.379999999999999 4.88 11.5 2.0 Z M5.5 7.5 Q6.34 9.66 8.5 10.5 Q6.34 11.34 5.5 13.5 Q4.66 11.34 2.5 10.5 Q4.66 9.66 5.5 7.5 Z" fill="#52cc92"/></svg>
<div class="abs" style="left:1000px;top:211px;width:16px;height:16px;border:1px solid #dcdee4;border-radius:3px"></div>
<div class="t" style="left:1032px;top:212.65px;font-size:14px;line-height:14px;color:#3a3a3a;font-weight:normal;letter-spacing:0px;">Positive</div>
<div class="abs" style="left:1000px;top:259px;width:16px;height:16px;border:1px solid #dcdee4;border-radius:3px"></div>
<div class="t" style="left:1032px;top:260.65px;font-size:14px;line-height:14px;color:#3a3a3a;font-weight:normal;letter-spacing:0px;">Neutral</div>
<div class="abs" style="left:1000px;top:307px;width:16px;height:16px;border:1px solid #dcdee4;border-radius:3px"></div>
<div class="t" style="left:1032px;top:308.65px;font-size:14px;line-height:14px;color:#3a3a3a;font-weight:normal;letter-spacing:0px;">Negative</div>
<div class="abs" style="left:960px;top:363px;width:480px;height:1px;background:#e3e4e8"></div>
<div class="t" style="left:984px;top:395.46px;font-size:16px;line-height:16px;color:#222;font-weight:normal;letter-spacing:-0.6px;-webkit-text-stroke:0.3px #222">Users</div>
<div class="abs" style="left:984px;top:420px;width:432px;height:48px;border:1px solid #dcdde3;border-radius:8px"></div>
<svg class="abs" style="left:1386px;top:441px" width="12" height="7"><path d="M1 1 L6 6 L11 1" fill="none" stroke="#8a8a8a" stroke-width="1.1"/></svg>
<div class="abs" style="left:960px;top:495px;width:480px;height:1px;background:#e3e4e8"></div>
<div class="t" style="left:984px;top:527.46px;font-size:16px;line-height:16px;color:#222;font-weight:normal;letter-spacing:0px;-webkit-text-stroke:0.3px #222">Numbers</div>
<div class="abs" style="left:984px;top:552px;width:432px;height:48px;border:1px solid #dcdde3;border-radius:8px"></div>
<svg class="abs" style="left:1386px;top:573px" width="12" height="7"><path d="M1 1 L6 6 L11 1" fill="none" stroke="#8a8a8a" stroke-width="1.1"/></svg>
<div class="abs" style="left:960px;top:627px;width:480px;height:1px;background:#e3e4e8"></div>
<div class="t" style="left:984px;top:659.46px;font-size:16px;line-height:16px;color:#222;font-weight:normal;letter-spacing:0px;-webkit-text-stroke:0.3px #222">Customers</div>
<div class="abs" style="left:984px;top:684px;width:432px;height:48px;border:1px solid #dcdde3;border-radius:8px"></div>
<svg class="abs" style="left:1386px;top:705px" width="12" height="7"><path d="M1 1 L6 6 L11 1" fill="none" stroke="#8a8a8a" stroke-width="1.1"/></svg>
<div class="abs" style="left:960px;top:759px;width:480px;height:1px;background:#e3e4e8"></div>
<div class="t" style="left:984px;top:787.46px;font-size:16px;line-height:16px;color:#222;font-weight:normal;letter-spacing:0.2px;-webkit-text-stroke:0.3px #222">Duration</div>
<div class="abs" style="left:1000px;top:830px;width:400px;height:4px;background:#00b388"></div>
<div class="abs" style="left:984px;top:820px;width:24px;height:24px;border-radius:50%;background:#fff;box-shadow:0 2px 3px rgba(0,0,0,.14)"></div>
<div class="abs" style="left:987px;top:823px;width:18px;height:18px;border-radius:50%;background:#00b388"></div>
<div class="abs" style="left:1392px;top:820px;width:24px;height:24px;border-radius:50%;background:#fff;box-shadow:0 2px 3px rgba(0,0,0,.14)"></div>
<div class="abs" style="left:1395px;top:823px;width:18px;height:18px;border-radius:50%;background:#00b388"></div>
<div class="abs" style="left:960px;top:844px;width:480px;height:80px;background:#fff"></div>
<div class="abs" style="left:960px;top:844px;width:480px;height:1px;background:#e3e4e8"></div>
<div class="t" style="left:984px;top:877.10px;font-size:15px;line-height:15px;color:#6b6b6b;font-weight:normal;letter-spacing:0.2px;">1000+ results</div>
<div class="t" style="left:1204.5px;top:877.10px;font-size:15px;line-height:15px;color:#9a9a9a;font-weight:normal;letter-spacing:0px;-webkit-text-stroke:0.4px #9a9a9a">Reset all</div>
<div class="abs" style="left:1297px;top:864px;width:119px;height:40px;background:#00b388;border-radius:7px"></div>
<div class="t" style="left:1313px;top:877.10px;font-size:15px;line-height:15px;color:#fff;font-weight:bold;letter-spacing:-0.1px;">View results</div>
</body></html>
